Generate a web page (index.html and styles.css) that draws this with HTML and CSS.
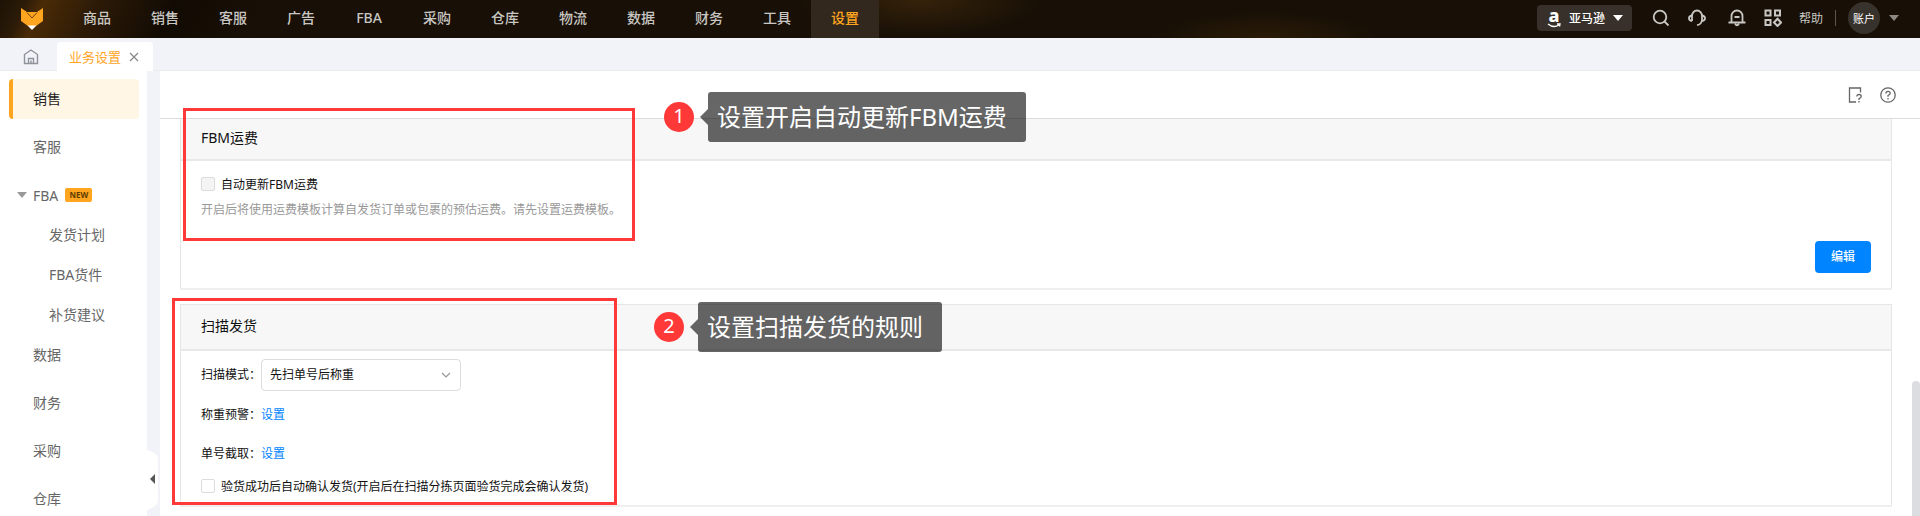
FILE: index.html
```
<!DOCTYPE html>
<html lang="zh-CN">
<head>
  <meta charset="UTF-8">
  <title>业务设置</title>
  <link rel="stylesheet" href="styles.css">
</head>
<body>

<header class="topbar">
  <a class="logo" href="#" aria-label="首页">
    <svg width="22" height="22" viewBox="0 0 22 22">
      <path d="M0 0 L6 4 H16 L22 0 V13 L15 18 H7 L0 13 Z" fill="#ffa51f"/>
      <path d="M6 4.500 L11 10 L16 4.500" fill="none" stroke="#6b4208" stroke-width="1"/>
      <path d="M6.500 17.500 H15.500 L11 22 Z" fill="#fff"/>
    </svg>
  </a>
  <nav class="nav">
    <a href="#">商品</a>
    <a href="#">销售</a>
    <a href="#">客服</a>
    <a href="#">广告</a>
    <a href="#">FBA</a>
    <a href="#">采购</a>
    <a href="#">仓库</a>
    <a href="#">物流</a>
    <a href="#">数据</a>
    <a href="#">财务</a>
    <a href="#">工具</a>
    <a href="#" class="active">设置</a>
  </nav>
  <div class="tools">
    <button class="platform">
      <span class="amazon">a
        <svg width="14" height="5" viewBox="0 0 14 5" fill="none" stroke="#fff" stroke-width="1.300"><path d="M1 1 Q6.500 5.500 12 2 M10 1 H13 L12.500 3.500"/></svg>
      </span>
      亚马逊
      <span class="caret"></span>
    </button>
    <button class="icon-btn" aria-label="搜索">
      <svg width="18" height="18" viewBox="0 0 18 18" fill="none" stroke="#c9c7c3" stroke-width="1.800"><circle cx="8" cy="8" r="6.300"/><path d="M12.500 12.500 L16.500 16.500"/></svg>
    </button>
    <button class="icon-btn" aria-label="客服">
      <svg width="18" height="18" viewBox="0 0 18 18" fill="none" stroke="#c9c7c3" stroke-width="1.800"><path d="M4 12 V7 A5 5.500 0 0 1 14 7 V11 Q13.500 15.500 9 16.200"/><path d="M4 6.500 Q1 7 1 9.200 Q1 11.500 4 12 M14 6.500 Q17 7 17 9.200 Q17 11.500 14 12"/></svg>
    </button>
    <button class="icon-btn bell" aria-label="通知">
      <svg width="18" height="18" viewBox="0 0 18 18" fill="none" stroke="#c9c7c3" stroke-width="1.800"><path d="M3.500 13.500 V7 A5.500 5.500 0 0 1 14.500 7 V13.500 M0.500 13.500 H17.500 M6.500 8 H11.500"/><path d="M7 14.500 Q9 18 11 14.500" /></svg>
    </button>
    <button class="icon-btn" aria-label="应用">
      <svg width="18" height="18" viewBox="0 0 18 18" fill="none" stroke="#c9c7c3" stroke-width="2"><rect x="1.500" y="1.500" width="5" height="5"/><rect x="11" y="1.500" width="5" height="5"/><rect x="1.500" y="11" width="5" height="5"/><path d="M13.500 9.800 L17 13.500 L13.500 17 L10 13.500 Z"/></svg>
    </button>
    <a class="help" href="#">帮助</a>
    <span class="divider"></span>
    <button class="account">账户</button>
    <span class="caret dim"></span>
  </div>
</header>

<div class="tabs">
  <a class="home" href="#" aria-label="主页">
    <svg width="16" height="16" viewBox="0 0 16 16" fill="none" stroke="#8f939b" stroke-width="1.400"><path d="M1.500 5.500 L8 1 L14.500 5.500 V14.500 H1.500 Z M5.500 14.500 V9.500 H10.500 V14.500 M8 14 V11.500"/></svg>
  </a>
  <div class="tab">
    <a href="#">业务设置</a>
    <button class="close" aria-label="关闭">
      <svg width="10" height="10" viewBox="0 0 10 10" stroke="#888" stroke-width="1.200"><path d="M1 1 L9 9 M9 1 L1 9"/></svg>
    </button>
  </div>
</div>

<div class="layout">
  <aside class="sidebar">
    <a class="item active" href="#">销售</a>
    <a class="item" href="#">客服</a>
    <a class="item parent" href="#"><span class="caret"></span>FBA <span class="new">NEW</span></a>
    <a class="item sub" href="#">发货计划</a>
    <a class="item sub" href="#">FBA货件</a>
    <a class="item sub" href="#">补货建议</a>
    <a class="item" href="#">数据</a>
    <a class="item" href="#">财务</a>
    <a class="item" href="#">采购</a>
    <a class="item" href="#">仓库</a>
  </aside>
  <div class="gutter">
    <button class="fold" aria-label="收起">
      <svg width="12" height="60" viewBox="0 0 12 60"><path d="M0 0 Q11 3 11 9 V51 Q11 56 0 60 Z" fill="#fff"/><path d="M8 24 V34 L3 29 Z" fill="#555"/></svg>
    </button>
  </div>

  <main class="main">
    <div class="toolbar">
      <button class="icon-btn" aria-label="说明">
        <svg width="16" height="16" viewBox="0 0 16 16" fill="none" stroke="#666" stroke-width="1.300"><path d="M12.500 5.500 V1 H1.500 V15 H8"/><path d="M8.800 9.500 Q9 7.500 11 7.500 Q13.200 7.500 13.200 9.500 Q13.200 10.500 11 11.700 V13 M11 14 V15.500"/></svg>
      </button>
      <button class="icon-btn" aria-label="帮助">
        <svg width="16" height="16" viewBox="0 0 16 16" fill="none" stroke="#666" stroke-width="1.300"><circle cx="8" cy="8" r="7.200"/><path d="M5.800 6.500 Q6 4.300 8 4.300 Q10.200 4.300 10.200 6.300 Q10.200 7.500 8 8.500 V9.800 M8 11 V12.500"/></svg>
      </button>
    </div>

    <section class="card first">
      <h2>FBM运费</h2>
      <div class="body">
        <label class="check"><input type="checkbox" disabled>自动更新FBM运费</label>
        <p class="hint">开启后将使用运费模板计算自发货订单或包裹的预估运费。请先设置运费模板。</p>
        <div class="actions"><button class="primary">编辑</button></div>
      </div>
      <div class="mark mark-1"></div>
      <div class="note note-1"><span class="num">1</span><span class="tip">设置开启自动更新FBM运费</span></div>
    </section>

    <section class="card">
      <h2>扫描发货</h2>
      <div class="body">
        <div class="row">
          <label for="mode">扫描模式：</label>
          <div class="select">
            <select id="mode"><option>先扫单号后称重</option></select>
            <svg width="10" height="6" viewBox="0 0 10 6" fill="none" stroke="#999" stroke-width="1.200"><path d="M1 1 L5 5 L9 1"/></svg>
          </div>
        </div>
        <div class="row"><span>称重预警：</span><a href="#">设置</a></div>
        <div class="row"><span>单号截取：</span><a href="#">设置</a></div>
        <label class="check"><input type="checkbox">验货成功后自动确认发货(开启后在扫描分拣页面验货完成会确认发货)</label>
      </div>
      <div class="mark mark-2"></div>
      <div class="note note-2"><span class="num">2</span><span class="tip">设置扫描发货的规则</span></div>
    </section>

    <div class="scrollbar"></div>
  </main>
</div>

</body>
</html>
```
FILE: styles.css
```
* {
  box-sizing: border-box;
}
body {
  margin: 0;
  height: 100vh;
  display: flex;
  flex-direction: column;
  overflow: hidden;
  background: #fff;
  color: #111;
  font-family: "Noto Sans", "Noto Sans CJK SC", sans-serif;
  font-size: 12px;
}
a {
  color: #0084ff;
  text-decoration: none;
}
button {
  border: 0;
  padding: 0;
  background: none;
  font: inherit;
  color: inherit;
  cursor: pointer;
}
svg {
  display: block;
}
.caret {
  border: 5px solid transparent;
  border-top: 6px solid #fff;
  border-bottom: 0;
}

/* top bar */
.topbar {
  flex: none;
  display: flex;
  height: 38px;
  background:
    radial-gradient(ellipse 120px 36px at 920px 0, #35220a, transparent),
    radial-gradient(ellipse 110px 26px at 1265px 38px, #2b1b07, transparent),
    linear-gradient(115deg, #1c1206 0, #2c1b08 24px, #4a2b06 40px, #2c1a07 90px, #120b03 160px, #181006 240px);
}
.logo {
  width: 63px;
  padding: 8px 0 0 21px;
}
.nav {
  display: flex;
}
.nav a {
  width: 68px;
  line-height: 36px;
  text-align: center;
  font-size: 14px;
  font-weight: 500;
  color: #c9c7c3;
}
.nav .active {
  background: #32281e;
  color: #ffa51f;
}
.tools {
  margin-left: auto;
  display: flex;
  align-items: center;
  height: 36px;
  padding-right: 21px;
  color: #c9c7c3;
}
.platform {
  display: flex;
  align-items: center;
  gap: 8px;
  width: 95px;
  height: 26px;
  padding-left: 10px;
  margin-right: 20px;
  border-radius: 4px;
  background: #38302a;
  color: #fff;
  font-weight: 500;
}
.amazon {
  width: 14px;
  height: 20px;
  font-size: 18px;
  font-weight: 800;
  line-height: 15px;
}
.tools .icon-btn {
  margin-right: 18px;
}
.tools .bell {
  margin-left: 4px;
}
.help {
  margin-left: -1px;
  margin-right: 12px;
  color: #c9c7c3;
}
.divider {
  width: 1px;
  height: 16px;
  margin-right: 12px;
  background: #5c564e;
}
.account {
  width: 32px;
  height: 32px;
  margin-right: 9px;
  border-radius: 50%;
  background: #37322c;
  color: #fff;
  font-size: 11px;
}
.dim {
  border-top-color: #8d8982;
}

/* page tabs */
.tabs {
  flex: none;
  display: flex;
  height: 33px;
  background: #f2f3f8;
  box-shadow: inset 0 -1px #ebebeb;
}
.home {
  width: 57px;
  padding: 11px 0 0 23px;
}
.tab {
  display: flex;
  align-items: center;
  gap: 8px;
  width: 96px;
  height: 29px;
  margin-top: 4px;
  padding-left: 12px;
  border-radius: 4px 4px 0 0;
  background: #fff;
}
.tab a {
  font-size: 13px;
  color: #ffa51f;
}

.layout {
  flex: 1;
  display: flex;
  min-height: 0;
}

/* left menu */
.sidebar {
  flex: none;
  width: 147px;
  padding: 8px 8px 0 9px;
}
.item {
  display: flex;
  align-items: center;
  height: 40px;
  margin-bottom: 8px;
  padding: 0 0 2px 24px;
  border-radius: 4px;
  font-size: 14px;
  color: #666;
}
.item.active {
  padding-left: 20px;
  border-left: 4px solid #ffa51f;
  background: #fff6e6;
  color: #222;
}
.item.parent {
  margin-bottom: 0;
  padding: 0 0 0 8px;
}
.parent .caret {
  margin-right: 6px;
  border-top-color: #999;
}
.sub {
  margin-bottom: 0;
  padding-left: 40px;
}
.sub + .item:not(.sub) {
  margin-top: 0;
}
.new {
  width: 27px;
  height: 14px;
  margin-left: 7px;
  border-radius: 2px;
  background: #ffa51f;
  color: #5e3c00;
  font-size: 8px;
  font-weight: 700;
  line-height: 14px;
  text-align: center;
}
.gutter {
  flex: none;
  position: relative;
  width: 13px;
  background: #f2f3f8;
}
.fold {
  position: absolute;
  left: 0;
  bottom: 6px;
}

/* content */
.main {
  flex: 1;
  position: relative;
}
.toolbar {
  display: flex;
  justify-content: flex-end;
  align-items: center;
  gap: 16px;
  height: 48px;
  padding-right: 24px;
  border-bottom: 1px solid #dcdcdc;
}
.card {
  position: relative;
  margin: 0 28px 14px 20px;
  border: 1px solid #e6e6e6;
  border-bottom: 2px solid #efefef;
}
.first {
  border-top: 0;
}
.card h2 {
  margin: 0;
  padding: 0 20px 2px;
  border-bottom: 2px solid #e8e8e8;
  background: #f7f7f7;
  font-size: 14px;
  font-weight: 400;
  line-height: 42px;
}
.card.first h2 {
  line-height: 38px;
}
.body {
  padding: 8px 20px 9px;
}
.check {
  display: flex;
  align-items: center;
  height: 20px;
}
.check input {
  appearance: none;
  width: 14px;
  height: 14px;
  margin: 0 6px 0 0;
  border: 1px solid #dcdcdc;
  border-radius: 2px;
}
.check input:disabled {
  background: #f4f4f4;
}
.first .check {
  margin-top: 5px;
}
.hint {
  margin: 5px 0 20px;
  line-height: 22px;
  color: #999;
}
.actions {
  display: flex;
  justify-content: flex-end;
}
.primary {
  width: 56px;
  height: 32px;
  margin-bottom: 6px;
  padding-bottom: 2px;
  border-radius: 4px;
  background: #0084ff;
  color: #fff;
  font-weight: 500;
}
.row {
  display: flex;
  align-items: center;
  height: 32px;
  margin-bottom: 7px;
}
.row > :first-child {
  width: 60px;
}
.row label {
  padding-bottom: 2px;
}
.select {
  position: relative;
  width: 200px;
}
.select select {
  appearance: none;
  width: 100%;
  height: 32px;
  padding: 0 8px 2px;
  border: 1px solid #dcdcdc;
  border-radius: 4px;
  background: #fff;
  color: #111;
  font: inherit;
}
.select svg {
  position: absolute;
  right: 10px;
  top: 13px;
}

/* red frames and callouts */
.mark {
  position: absolute;
  z-index: 1;
  border: 3px solid #ff3838;
  pointer-events: none;
}
.mark-1 {
  left: 2px;
  top: -11px;
  width: 452px;
  height: 133px;
}
.mark-2 {
  left: -9px;
  top: -7px;
  width: 445px;
  height: 207px;
}
.note {
  position: absolute;
  z-index: 1;
  display: flex;
  align-items: center;
  gap: 14px;
}
.note-1 {
  left: 483px;
  top: -27px;
}
.note-2 {
  left: 473px;
  top: -3px;
}
.num {
  width: 30px;
  height: 30px;
  border-radius: 50%;
  background: #ff3838;
  color: #fff;
  font-size: 20px;
  line-height: 28px;
  text-align: center;
}
.tip {
  position: relative;
  padding: 0 19px 0 9px;
  border-radius: 3px;
  background: rgba(0, 0, 0, 0.6);
  color: #fff;
  font-size: 24px;
  line-height: 50px;
}
.tip::before {
  content: "";
  position: absolute;
  left: -8px;
  top: 17px;
  border: 8px solid transparent;
  border-left: 0;
  border-right-color: rgba(0, 0, 0, 0.6);
}
.scrollbar {
  position: absolute;
  right: 0;
  bottom: 0;
  width: 8px;
  height: 135px;
  border-radius: 4px 4px 0 0;
  background: #dcdde0;
}
```
